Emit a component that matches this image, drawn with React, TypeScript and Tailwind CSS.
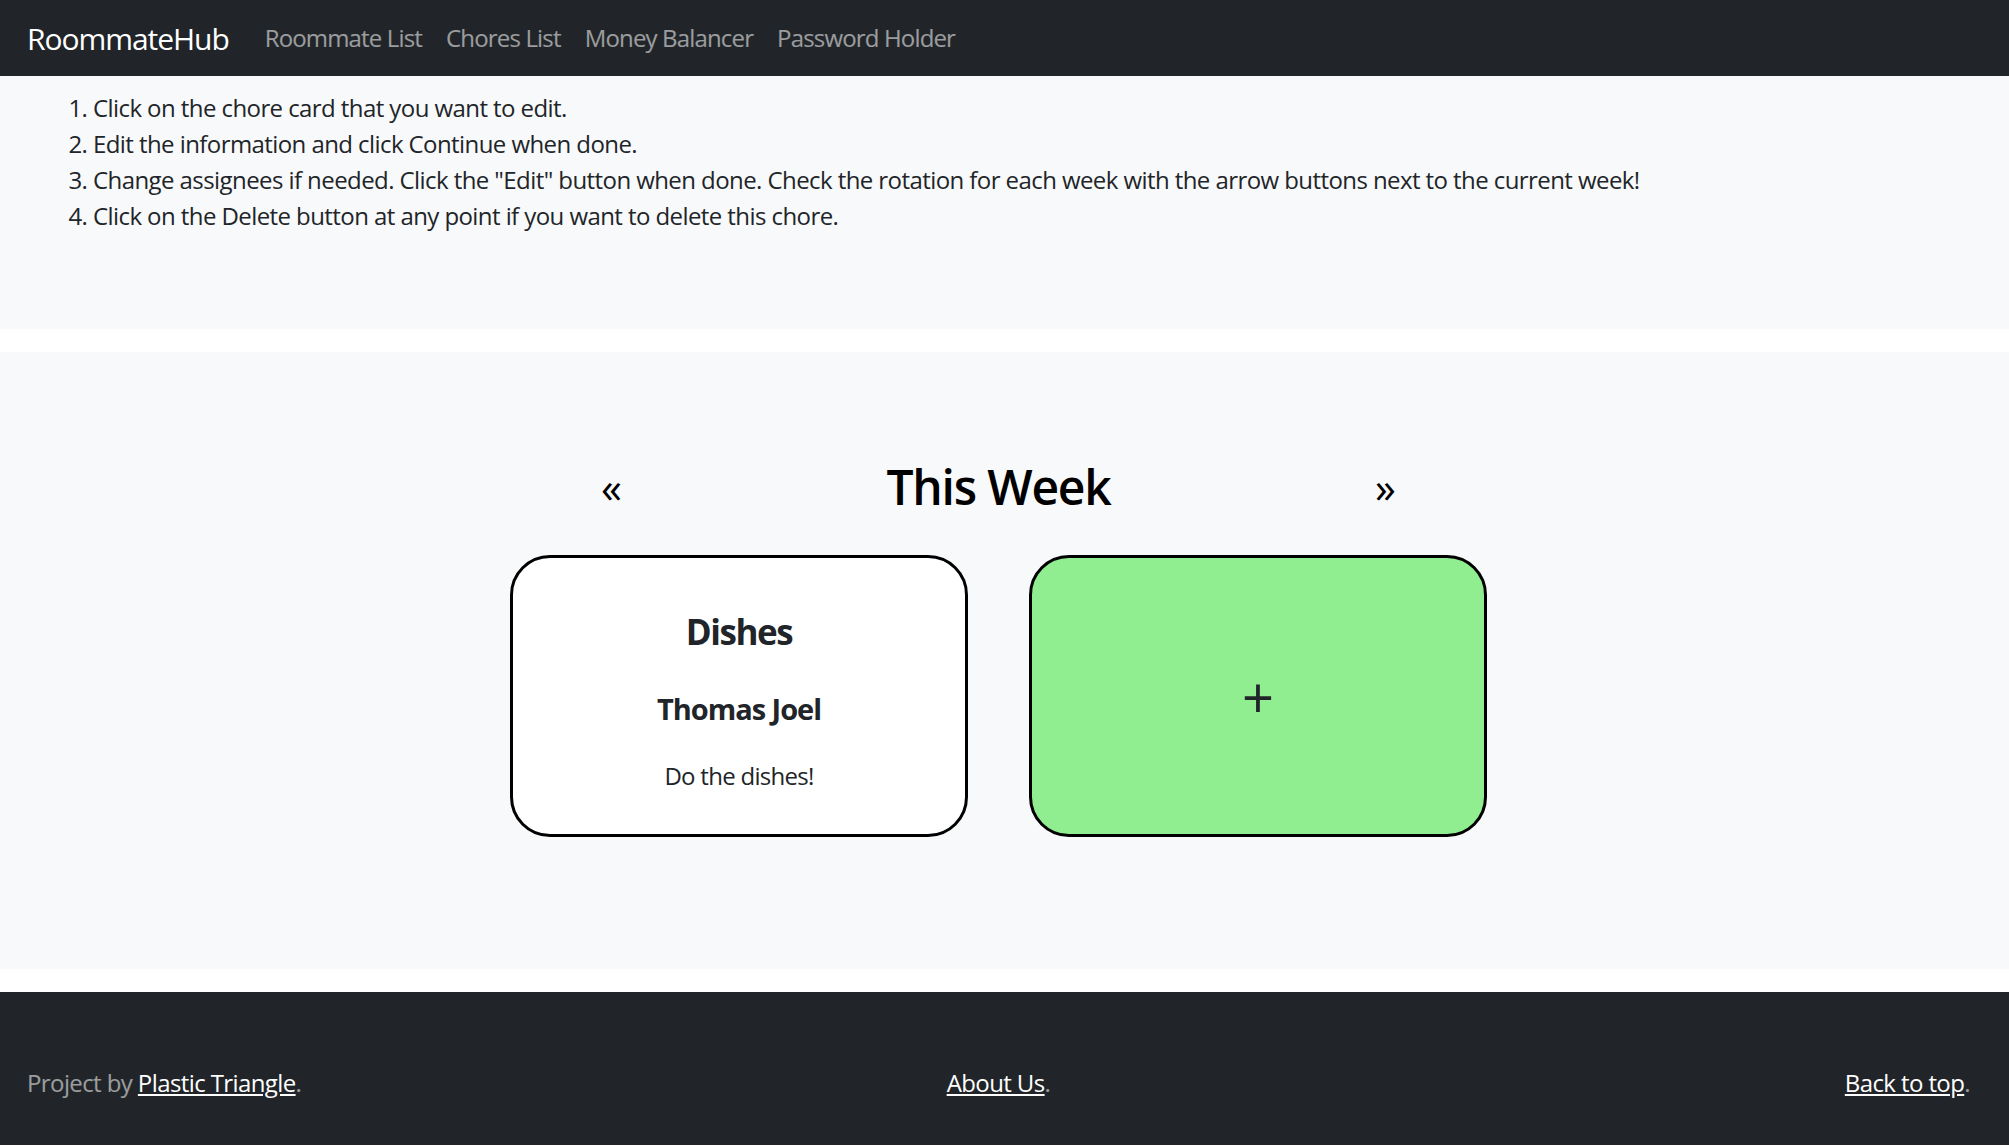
const font = { fontFamily: '"Open Sans", "Noto Sans", sans-serif' };

const navLinks = ["Roommate List", "Chores List", "Money Balancer", "Password Holder"];

const steps = [
  "Click on the chore card that you want to edit.",
  "Edit the information and click Continue when done.",
  'Change assignees if needed. Click the "Edit" button when done. Check the rotation for each week with the arrow buttons next to the current week!',
  "Click on the Delete button at any point if you want to delete this chore.",
];

function Navbar() {
  return (
    <nav className="h-[76px] bg-[#212529] flex items-center pl-[27px]">
      <a href="#" className="text-[30px] leading-[45px] text-white mr-[24px] tracking-[-0.035em]">
        RoommateHub
      </a>
      <div className="flex items-center">
        {navLinks.map((l) => (
          <a key={l} href="#" className="px-[12px] text-[24px] leading-[36px] text-white/55 tracking-[-0.035em]">
            {l}
          </a>
        ))}
      </div>
    </nav>
  );
}

function ChoreCard() {
  return (
    <div className="w-[458px] h-[282px] bg-white border-[3px] border-black rounded-[40px] flex flex-col items-center pt-[50px] text-[#212529] cursor-pointer">
      <h3 className="text-[35px] leading-[48px] font-bold tracking-[-0.04em]">Dishes</h3>
      <h5 className="mt-[35px] text-[29px] leading-[36px] font-bold tracking-[-0.035em]">Thomas Joel</h5>
      <p className="mt-[31px] text-[24px] leading-[36px] tracking-[-0.03em]">Do the dishes!</p>
    </div>
  );
}

function AddCard() {
  return (
    <button className="w-[458px] h-[282px] bg-[#90ee90] border-[3px] border-black rounded-[40px] flex items-center justify-center text-[#212529] cursor-pointer">
      <span className="text-[56px] leading-none">+</span>
    </button>
  );
}

export default function App() {
  return (
    <div className="min-h-screen bg-white text-[#212529]" style={font}>
      <Navbar />

      <section className="bg-[#f8f9fa] h-[253px] pt-[14px]">
        <ol className="list-decimal pl-[93px] text-[24px] leading-[36px] tracking-[-0.024em]">
          {steps.map((s) => (
            <li key={s}>{s}</li>
          ))}
        </ol>
      </section>

      <section className="mt-[23px] bg-[#f8f9fa] h-[617px] pt-[106px] flex flex-col items-center pr-[12px]">
        <div className="flex items-center h-[58px]">
          <button className="w-[60px] text-center text-[42px] leading-[58px] text-black cursor-pointer">«</button>
          <h2 className="w-[714px] text-center text-[48px] leading-[58px] font-semibold text-black tracking-[-0.025em]">
            This Week
          </h2>
          <button className="w-[60px] text-center text-[42px] leading-[58px] text-black cursor-pointer">»</button>
        </div>
        <div className="mt-[39px] flex gap-[61px]">
          <ChoreCard />
          <AddCard />
        </div>
      </section>

      <footer className="mt-[23px] bg-[#212529] h-[153px] pt-[73px] pl-[27px] pr-[39px] grid grid-cols-3 text-[24px] leading-[36px] tracking-[-0.025em]">
        <p className="text-white/55">
          Project by <a href="#" className="text-white underline">Plastic Triangle</a>.
        </p>
        <p className="text-center text-white/55">
          <a href="#" className="text-white underline">About Us</a>.
        </p>
        <p className="text-right text-white/55">
          <a href="#" className="text-white underline">Back to top</a>.
        </p>
      </footer>
    </div>
  );
}
